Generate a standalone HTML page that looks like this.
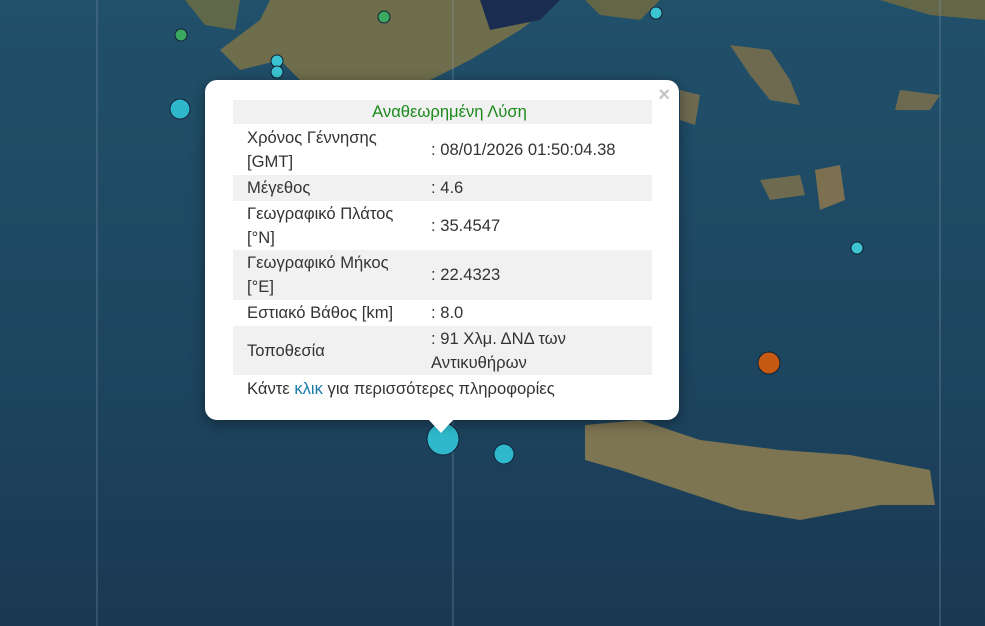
<!DOCTYPE html>
<html><head><meta charset="utf-8"><style>
body{margin:0;width:985px;height:626px;overflow:hidden;background:#1e4660;font-family:"Liberation Sans",sans-serif;}
#map{position:absolute;left:0;top:0}
.pop{position:absolute;left:205px;top:80px;width:474px;height:340px;background:#fff;border-radius:12px;box-shadow:0 3px 14px rgba(0,0,0,.4)}
.tip{position:absolute;left:428px;top:419px;width:0;height:0;border-left:13px solid transparent;border-right:13px solid transparent;border-top:14px solid #fff}
.x{position:absolute;right:9px;top:4px;color:#c3c3c3;font-size:20px;font-weight:bold}
table{position:absolute;left:28px;top:20px;width:419px;border-collapse:collapse;font-size:16.6px;color:#333}
td{padding:0 0 0 14px;line-height:24px;vertical-align:middle}
tr.g{background:#f1f1f1}
td.v{padding-left:0}
.h{color:#1a8a1a;text-align:center;height:24px}
</style></head><body>
<svg id="map" width="985" height="626">
<defs><linearGradient id="sea" x1="0" y1="0" x2="0" y2="1"><stop offset="0" stop-color="#21506a"/><stop offset=".6" stop-color="#1d4560"/><stop offset="1" stop-color="#1a3852"/></linearGradient></defs>
<rect width="985" height="626" fill="url(#sea)"/>
<path d="M185 0 L240 0 L235 30 L205 25Z" fill="#5f6848"/>
<path d="M270 0 L560 0 L520 30 L470 60 L430 80 L300 80 L280 60 L240 70 L220 50 L260 20Z" fill="#6e6d4c"/>
<path d="M480 0 L560 0 L540 20 L490 30Z" fill="#1a2d50"/>
<path d="M585 0 L660 0 L640 20 L600 15Z" fill="#636748"/>
<path d="M880 0 L985 0 L985 20 L930 15Z" fill="#636748"/>
<path d="M730 45 L770 50 L790 80 L800 105 L770 100 L750 75Z" fill="#6e6a50"/>
<path d="M900 90 L940 95 L930 110 L895 110Z" fill="#6e6a50"/>
<path d="M815 170 L840 165 L845 200 L820 210Z" fill="#7d7050"/>
<path d="M585 425 L640 420 L700 440 L780 450 L850 455 L930 470 L935 505 L880 505 L800 520 L740 510 L680 490 L620 470 L585 460Z" fill="#7d7552"/>
<path d="M680 90 L700 95 L695 125 L680 120Z" fill="#6e6a50"/>
<path d="M760 180 L800 175 L805 195 L770 200Z" fill="#6e6a50"/>
<line x1="97" y1="0" x2="97" y2="626" stroke="#8aa0b5" stroke-width="1" opacity=".5"/>
<line x1="453" y1="0" x2="453" y2="626" stroke="#8aa0b5" stroke-width="1" opacity=".5"/>
<line x1="940" y1="0" x2="940" y2="626" stroke="#8aa0b5" stroke-width="1" opacity=".5"/>
<g stroke="#123" stroke-width="1">
<circle cx="181" cy="35" r="6" fill="#3aa860"/>
<circle cx="384" cy="17" r="6" fill="#3aa860"/>
<circle cx="656" cy="13" r="6" fill="#3cc4d2"/>
<circle cx="277" cy="61" r="6" fill="#3cc4d2"/>
<circle cx="277" cy="72" r="6" fill="#3cc4d2"/>
<circle cx="180" cy="109" r="10" fill="#2fb8cc"/>
<circle cx="857" cy="248" r="6" fill="#3cc4d2"/>
<circle cx="769" cy="363" r="11" fill="#c65a12"/>
<circle cx="443" cy="439" r="16" fill="#2fb8cc"/>
<circle cx="504" cy="454" r="10" fill="#2fb8cc"/>
</g>
</svg>
<div class="pop"><div class="x">×</div>
<table>
<tr class="g"><td colspan="2" class="h">Αναθεωρημένη Λύση</td></tr>
<tr style="height:51px"><td style="width:184px">Χρόνος Γέννησης<br>[GMT]</td><td class="v">: 08/01/2026 01:50:04.38</td></tr>
<tr class="g" style="height:26px"><td>Μέγεθος</td><td class="v">: 4.6</td></tr>
<tr style="height:49px"><td>Γεωγραφικό Πλάτος<br>[°N]</td><td class="v">: 35.4547</td></tr>
<tr class="g" style="height:50px"><td>Γεωγραφικό Μήκος<br>[°E]</td><td class="v">: 22.4323</td></tr>
<tr style="height:26px"><td>Εστιακό Βάθος [km]</td><td class="v">: 8.0</td></tr>
<tr class="g" style="height:49px"><td>Τοποθεσία</td><td class="v">: 91 Χλμ. ΔΝΔ των<br>Αντικυθήρων</td></tr>
<tr style="height:28px"><td colspan="2">Κάντε <span style="color:#1a7aa8">κλικ</span> για περισσότερες πληροφορίες</td></tr>
</table></div>
<div class="tip"></div>
</body></html>
